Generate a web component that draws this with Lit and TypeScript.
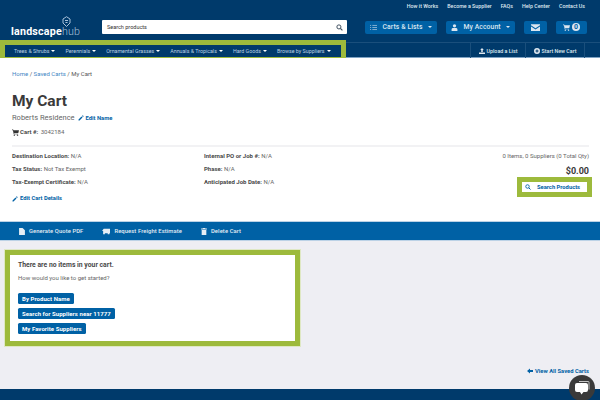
import { LitElement, html, css, svg } from "lit";
import { customElement } from "lit/decorators.js";

const pencil = svg`<path d="M1 9v2h2l6-6-2-2zM8 2l2 2 1-1a.7.7 0 0 0 0-1l-1-1a.7.7 0 0 0-1 0z"/>`;
const cart = svg`<path d="M0 1h2l.5 1H12l-1.2 5H3.6l.3 1H10.500v1H3L1.500 2H0z"/><circle cx="4" cy="10.500" r="1.200"/><circle cx="9.500" cy="10.500" r="1.200"/>`;
const search = svg`<circle cx="5" cy="5" r="3.500" fill="none" stroke="currentColor" stroke-width="1.700"/><path d="M7.500 7.500 11 11" stroke="currentColor" stroke-width="2" fill="none"/>`;
const icon = (p: unknown, cls = "i") => html`<svg class=${cls} viewBox="0 0 12 12" fill="currentColor">${p}</svg>`;

@customElement("app-root")
export class AppRoot extends LitElement {
  static styles = css`
    :host { display: block; width: 600px; height: 400px; overflow: hidden; position: relative; font-family: Roboto, "Liberation Sans", sans-serif; color: #4a4a4a; font-size: 6px; background: #eeeef3; }
    a { text-decoration: none; white-space: nowrap; }
    .i { width: 7px; height: 7px; flex: none; }
    header { background: #003a6b; height: 58px; position: relative; border-bottom: 1px solid #7fa3c4; box-sizing: border-box; }
    .top { display: flex; justify-content: flex-end; gap: 9px; padding: 3px 15px 0 0; height: 19px; box-sizing: border-box; color: #dfe8f0; font-size: 5.300px; font-weight: 500; line-height: 6px; }
    .mid { display: flex; align-items: center; height: 16px; padding-left: 11px; }
    .logo { width: 83px; height: 14px; position: relative; color: #fff; font-size: 10.700px; font-weight: 700; letter-spacing: .2px; line-height: 12px; display: flex; align-items: flex-end; margin-top: 7px; }
    .logo span { font-weight: 300; color: #a9c2da; }
    .logo svg { position: absolute; left: 51px; top: -8px; width: 9px; height: 12px; color: #a9c2da; }
    .search { margin-left: 8px; width: 245px; height: 14px; background: #fff; border-radius: 1px; display: flex; align-items: center; justify-content: space-between; padding: 0 4px 0 5px; box-sizing: border-box; color: #333; font-size: 5.500px; flex: none; }
    .search svg { width: 7px; height: 7px; color: #3f4f5f; }
    .btns { display: flex; margin-left: 18px; gap: 9px; }
    .hb { height: 13px; background: #0061a5; border-radius: 2px; display: flex; align-items: center; justify-content: center; gap: 5px; color: #dbe6f0; font-size: 6.800px; font-weight: 500; letter-spacing: .1px; box-sizing: border-box; }
    .caret { width: 0; height: 0; border-left: 2.500px solid transparent; border-right: 2.500px solid transparent; border-top: 2.500px solid currentColor; }
    .row { display: flex; justify-content: space-between; align-items: flex-start; position: absolute; left: 0; right: 0; top: 42px; height: 15px; border-top: 1px solid #1a4f7c; box-sizing: border-box; }
    .hl { border: 5px solid #9dba3c; background: #003a6b; display: flex; gap: 10px; height: 22px; width: 346px; box-sizing: border-box; margin-top: -3px; padding: 0 0 0 9px; align-items: center; color: #bcd0e2; font-size: 5.300px; position: relative; white-space: nowrap; }
    .hl a { display: flex; align-items: center; gap: 2px; color: #bcd0e2; }
    .hl .caret { border-left-width: 2px; border-right-width: 2px; border-top-width: 2px; color: #fff; }
    .act { display: flex; margin-right: 15px; height: 14px; }
    .act a { border-left: 1px solid #1a4f7c; display: flex; align-items: center; justify-content: center; gap: 2px; color: #dfe8f0; font-size: 5.300px; font-weight: 500; height: 15px; width: 55px; box-sizing: border-box; }
    .act a:last-child { border-right: 1px solid #1a4f7c; width: 60px; }
    .act svg { width: 6px; height: 6px; }
    main { background: #fff; height: 163px; box-sizing: border-box; padding: 12px 11px 0 12px; position: relative; }
    .crumb { font-size: 6px; line-height: 8px; color: #555; }
    .crumb a { color: #3f87c4; }
    h1 { margin: 13px 0 0; font-size: 15.500px; line-height: 20px; font-weight: 700; color: #3a3a3a; }
    .name { margin-top: 2px; display: flex; align-items: center; font-size: 7.500px; line-height: 10px; color: #666; }
    .edit { color: #0061a5; font-weight: 700; font-size: 5.800px; display: inline-flex; align-items: center; gap: 2px; }
    .edit svg { width: 6px; height: 6px; }
    .name .edit { margin-left: 3px; }
    .cnum { display: flex; align-items: center; gap: 1px; margin-top: 5px; font-size: 6px; line-height: 8px; color: #666; }
    b { font-weight: 700; color: #4a4a4a; }
    hr { border: 0; border-top: 2px solid #f2f2f4; margin: 9px 0 0 0; }
    .grid { display: grid; grid-template-columns: 192px 1fr auto; margin-top: 2px; font-size: 6px; color: #666; line-height: 13px; }
    .stack { display: flex; flex-direction: column; align-items: flex-start; }
    .right { align-items: flex-end; }
    .price { font-size: 9px; font-weight: 700; color: #3a3a3a; margin-top: 3px; line-height: 13px; }
    .sp { margin: -1px -3px 0 0; border: 5px solid #9dba3c; width: 75px; height: 20px; box-sizing: border-box; background: #fff; color: #0061a5; font-weight: 700; font-size: 5.800px; display: flex; align-items: center; padding-left: 3px; gap: 6px; line-height: 8px; }
    .sp svg { width: 6px; height: 6px; }
    .ecd { margin-top: 4px; }
    .bar { height: 20px; background: #0061a5; border-top: 1px solid #bcd2e6; border-bottom: 1px solid #bcd2e6; box-sizing: border-box; display: flex; align-items: center; padding-left: 19px; gap: 19px; color: #e6eef5; font-size: 5.800px; font-weight: 500; letter-spacing: .1px; }
    .bar a { display: flex; align-items: center; gap: 4px; }
    .bar svg { width: 6px; height: 7px; }
    .gray { height: 148px; padding: 9px 0 0 5px; box-sizing: border-box; position: relative; }
    .card { width: 295px; height: 96px; border: 5px solid #9dba3c; background: #fff; box-sizing: border-box; padding: 5px 8px; outline: 1px solid #dfe8c4; }
    .card h2 { margin: 0; font-size: 6.800px; line-height: 10px; font-weight: 700; color: #4a4a4a; }
    .card p { margin: 3px 0 0; font-size: 6px; line-height: 9px; color: #666; }
    .cbtns { display: flex; flex-direction: column; align-items: flex-start; gap: 4px; margin-top: 11px; }
    .cbtns a { background: #0061a5; color: #fff; font-size: 6px; font-weight: 700; letter-spacing: .05px; height: 11px; line-height: 11px; padding: 0 4px; border-radius: 1.500px; }
    .all { position: absolute; right: 11px; top: 126px; color: #0061a5; font-weight: 700; font-size: 5.800px; display: flex; align-items: center; gap: 2px; line-height: 8px; }
    .all svg { width: 6px; height: 6px; }
    footer { height: 11px; background: #003a6b; }
    .chat { position: absolute; left: 569px; top: 375px; width: 26px; height: 26px; border-radius: 50%; background: #3a3a3a; display: flex; align-items: center; justify-content: center; }
    .chat svg { width: 16px; height: 16px; }
  `;

  render() {
    return html`
      <header>
        <div class="top"><span>How it Works</span><span>Become a Supplier</span><span>FAQs</span><span>Help Center</span><span>Contact Us</span></div>
        <div class="mid">
          <div class="logo">landscape<span>hub</span>
            <svg viewBox="0 0 9 12" fill="none" stroke="currentColor"><path d="M4.500 .7 8 3v4l-3.500 3.500L1 7V3z" stroke-width="1"/><path d="M3 4.500h3M3.500 6.500h2" stroke-width="1.200"/></svg>
          </div>
          <div class="search"><span>Search products</span>${icon(search)}</div>
          <div class="btns">
            <a class="hb" style="width:72px"><svg class="i" viewBox="0 0 12 12" fill="none" stroke="currentColor"><path d="M4 2.500h8M4 6h8M4 9.500h8M0 2.500h2M0 6h2M0 9.500h2"/></svg>Carts &amp; Lists<i class="caret"></i></a>
            <a class="hb" style="width:69px"><svg class="i" viewBox="0 0 12 12" fill="currentColor"><circle cx="6" cy="3.200" r="2.800"/><path d="M1 12V9.500Q1 7 3.500 7h5Q11 7 11 9.500V12z"/></svg>My Account<i class="caret"></i></a>
            <a class="hb" style="width:23px"><svg style="width:9px;height:7px" viewBox="0 0 12 9" fill="currentColor"><path d="M0 0h12v1.500L6 5.500 0 1.500zM0 3l6 4 6-4v6H0z"/></svg></a>
            <a class="hb" style="width:31px;gap:2px">${icon(cart, "i")}<span style="background:#dbe6f0;color:#0061a5;border-radius:4px;width:8px;height:8px;font-size:7px;font-weight:700;line-height:8px;text-align:center">0</span></a>
          </div>
        </div>
        <div class="row">
          <div class="hl">
            ${["Trees & Shrubs","Perennials","Ornamental Grasses","Annuals & Tropicals","Hard Goods","Browse by Suppliers"].map(t => html`<a>${t}<i class="caret"></i></a>`)}
          </div>
          <div class="act">
            <a><svg viewBox="0 0 12 12" fill="currentColor"><path d="M6 0 9.500 4H7.500v4h-3V4H2.500zM0 9h12v3H0z"/></svg>Upload a List</a>
            <a><svg viewBox="0 0 12 12" fill="currentColor"><path fill-rule="evenodd" d="M6 0a6 6 0 1 0 0 12A6 6 0 0 0 6 0zM5 3h2v2h2v2H7v2H5V7H3V5h2z"/></svg>Start New Cart</a>
          </div>
        </div>
      </header>
      <main>
        <div class="crumb"><a>Home</a> / <a>Saved Carts</a> / My Cart</div>
        <h1>My Cart</h1>
        <div class="name">Roberts Residence <a class="edit">${icon(pencil)}Edit Name</a></div>
        <div class="cnum"><svg class="i" viewBox="0 0 12 12" fill="#333">${cart}</svg><b>Cart #:</b>&nbsp;3042184</div>
        <hr />
        <div class="grid">
          <div class="stack">
            <span><b>Destination Location:</b> N/A</span>
            <span><b>Tax Status:</b> Not Tax Exempt</span>
            <span><b>Tax-Exempt Certificate:</b> N/A</span>
            <a class="edit ecd">${icon(pencil)}Edit Cart Details</a>
          </div>
          <div class="stack">
            <span><b>Internal PO or Job #:</b> N/A</span>
            <span><b>Phase:</b> N/A</span>
            <span><b>Anticipated Job Date:</b> N/A</span>
          </div>
          <div class="stack right">
            <span>0 Items, 0 Suppliers (0 Total Qty)</span>
            <span class="price">$0.00</span>
            <a class="sp">${icon(search)}Search Products</a>
          </div>
        </div>
      </main>
      <div class="bar">
        <a><svg viewBox="0 0 10 12" fill="currentColor"><path d="M0 0h6l4 4v8H0z"/></svg>Generate Quote PDF</a>
        <a><svg style="width:8px" viewBox="0 0 14 10" fill="currentColor"><path d="M3 0h11v8H2v-4H0zM2 8h3v2H2zM10 8h3v2h-3z"/></svg>Request Freight Estimate</a>
        <a><svg viewBox="0 0 10 12" fill="currentColor"><path d="M3 0h4v1h3v1.500H0V1h3zM1 3.500h8V12H1z"/></svg>Delete Cart</a>
      </div>
      <div class="gray">
        <div class="card">
          <h2>There are no items in your cart.</h2>
          <p>How would you like to get started?</p>
          <div class="cbtns">
            <a>By Product Name</a>
            <a>Search for Suppliers near 11777</a>
            <a>My Favorite Suppliers</a>
          </div>
        </div>
        <a class="all"><svg class="i" viewBox="0 0 12 12" fill="currentColor"><path d="M6 1v3h6v4H6v3L0 6z"/></svg>View All Saved Carts</a>
      </div>
      <footer></footer>
      <div class="chat"><svg viewBox="0 0 16 16" fill="#fff"><path d="M5 1h9a1.500 1.500 0 0 1 1.500 1.500v7h-1V2H5z" opacity=".7"/><path d="M3 3h9a2 2 0 0 1 2 2v5a2 2 0 0 1-2 2H9.500L7.500 14.500 6 12H3a2 2 0 0 1-2-2V5a2 2 0 0 1 2-2z"/></svg></div>
    `;
  }
}
